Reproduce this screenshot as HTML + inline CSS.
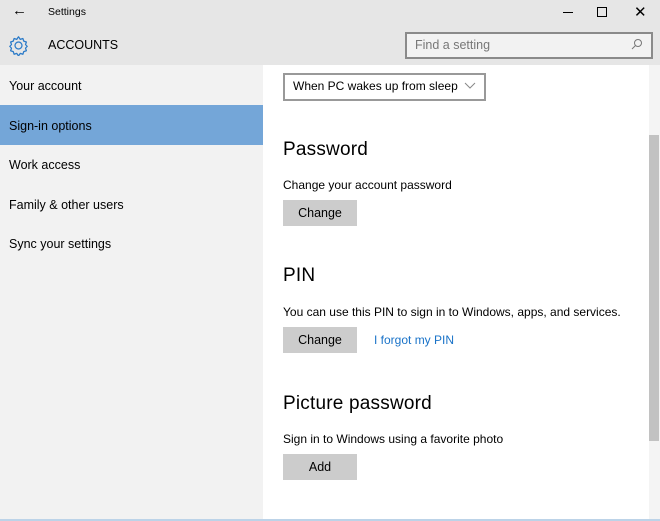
<!DOCTYPE html><html><head><style>
body{margin:0;width:660px;height:521px;overflow:hidden;font-family:"Liberation Sans",sans-serif;background:#fff;position:relative}
.a{position:absolute}
.t{font-size:12px;color:#000;white-space:nowrap}
.s{font-size:12.5px}
.h{font-size:19px;letter-spacing:0.2px}
.btn{position:absolute;left:283px;width:74px;height:26px;background:#ccc;font-size:12.5px;text-align:center;line-height:26px;color:#000}
</style></head><body>
<div class="a" style="left:0;top:0;width:660px;height:65px;background:#e6e6e6"></div>
<div class="a t" style="left:12px;top:2px;font-size:15px">&#8592;</div>
<div class="a t" style="left:48px;top:6px;font-size:10.5px">Settings</div>
<div class="a" style="left:563px;top:12px;width:10px;height:1px;background:#000"></div>
<div class="a" style="left:597px;top:7px;width:8px;height:8px;border:1px solid #000"></div>
<div class="a t" style="left:634px;top:3px;font-size:15px">✕</div>
<svg class="a" style="left:8px;top:35px" width="21" height="21" viewBox="0 0 24 24"><path d="M12 2l2 3 3-1 1 3 3 1-1 3 2 2-2 2 1 3-3 1-1 3-3-1-2 3-2-3-3 1-1-3-3-1 1-3-2-2 2-2-1-3 3-1 1-3 3 1z" fill="none" stroke="#2a7ac8" stroke-width="1.4" stroke-linejoin="round"/><circle cx="12" cy="12" r="4" fill="none" stroke="#2a7ac8" stroke-width="1.4"/></svg>
<div class="a t" style="left:48px;top:38px;font-size:12.5px">ACCOUNTS</div>
<div class="a" style="left:405px;top:32px;width:244px;height:23px;border:2px solid #8a8a8a;background:#f2f2f2"></div>
<div class="a t" style="left:415px;top:38px;color:#777;font-size:12.5px">Find a setting</div>
<svg class="a" style="left:631px;top:38px" width="12" height="12" viewBox="0 0 12 12"><circle cx="7" cy="5" r="3.5" fill="none" stroke="#777"/><path d="M4.5 7.5L1 11" stroke="#777"/></svg>
<div class="a" style="left:0;top:65px;width:263px;height:456px;background:#f2f2f2"></div>
<div class="a" style="left:0;top:105px;width:263px;height:40px;background:#74a6d8"></div>
<div class="a t s" style="left:9px;top:79px">Your account</div>
<div class="a t s" style="left:9px;top:119px">Sign-in options</div>
<div class="a t s" style="left:9px;top:158px">Work access</div>
<div class="a t s" style="left:9px;top:198px">Family &amp; other users</div>
<div class="a t s" style="left:9px;top:237px">Sync your settings</div>
<div class="a" style="left:283px;top:73px;width:199px;height:24px;border:2px solid #999;background:#fff"></div>
<div class="a t" style="left:293px;top:79px">When PC wakes up from sleep</div>
<svg class="a" style="left:464px;top:82px" width="12" height="8" viewBox="0 0 12 8"><path d="M1 1l5 5 5-5" fill="none" stroke="#888"/></svg>
<div class="a t h" style="left:283px;top:139px">Password</div>
<div class="a t" style="left:283px;top:178px">Change your account password</div>
<div class="btn" style="top:200px">Change</div>
<div class="a t h" style="left:283px;top:265px">PIN</div>
<div class="a t" style="left:283px;top:305px">You can use this PIN to sign in to Windows, apps, and services.</div>
<div class="btn" style="top:327px">Change</div>
<div class="a t" style="left:374px;top:333px;color:#1a73c8">I forgot my PIN</div>
<div class="a t h" style="left:283px;top:393px">Picture password</div>
<div class="a t" style="left:283px;top:432px">Sign in to Windows using a favorite photo</div>
<div class="btn" style="top:454px">Add</div>
<div class="a" style="left:649px;top:65px;width:11px;height:454px;background:#f4f4f4"></div>
<div class="a" style="left:649px;top:135px;width:10px;height:306px;background:#c2c2c2"></div>
<div class="a" style="left:0;top:519px;width:660px;height:2px;background:#bcd3e8"></div>
</body></html>
